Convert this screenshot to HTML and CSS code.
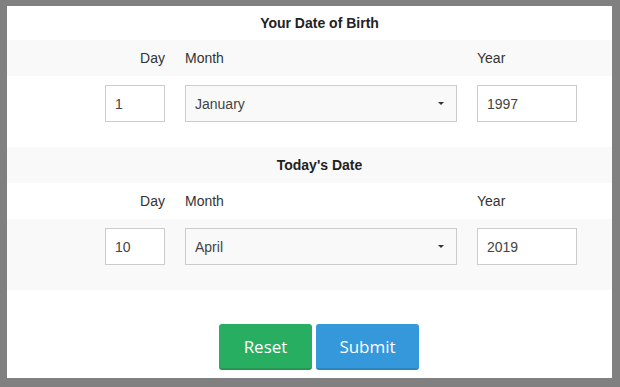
FILE: index.html
```html
<!DOCTYPE html>
<html lang="en">
<head>
    <meta charset="UTF-8">
    <meta name="viewport" content="width=device-width, initial-scale=1.0">
    <title>Age Calculator</title>
    <link rel="stylesheet" href="styles.css">
</head>
<body>
    <div class="panel">
        <div class="row title-row">Your Date of Birth</div>
        <div class="row label-row shaded">
            <span class="day-label">Day</span>
            <span>Month</span>
            <span>Year</span>
        </div>
        <div class="row input-row">
            <input type="text" class="day-input" value="1">
            <div class="select-wrap">
                <select>
                    <option selected>January</option>
                    <option>February</option>
                </select>
            </div>
            <input type="text" class="year-input" value="1997">
        </div>

        <div class="row title-row shaded tall">Today's Date</div>
        <div class="row label-row">
            <span class="day-label">Day</span>
            <span>Month</span>
            <span>Year</span>
        </div>
        <div class="row input-row shaded">
            <input type="text" class="day-input" value="10">
            <div class="select-wrap">
                <select>
                    <option>March</option>
                    <option selected>April</option>
                </select>
            </div>
            <input type="text" class="year-input" value="2019">
        </div>

        <div class="actions">
            <button class="btn btn-reset">Reset</button>
            <button class="btn btn-submit">Submit</button>
        </div>
    </div>
</body>
</html>
```

FILE: styles.css
```css
body {
    margin: 0;
    padding: 6px 8px 9px 7px;
    background-color: #808080;
    font-family: 'Liberation Sans', Arial, sans-serif;
    color: #333;
}

.panel {
    background-color: #fff;
    height: 372px;
}

.row {
    display: grid;
    grid-template-columns: 158px 272px 100px;
    column-gap: 20px;
}

.shaded {
    background-color: #f9f9f9;
}

.title-row {
    display: flex;
    justify-content: center;
    align-items: center;
    height: 34px;
    padding-left: 20px;
    font-size: 14px;
    font-weight: bold;
    color: #222;
}

.title-row.tall {
    height: 36px;
}

.label-row {
    height: 36px;
    align-items: center;
    font-size: 14px;
}

.day-label {
    text-align: right;
}

.input-row {
    height: 71px;
    box-sizing: border-box;
    padding-top: 9px;
    align-items: start;
}

.input-row input,
.input-row select {
    height: 37px;
    box-sizing: border-box;
    border: 1px solid #ccc;
    border-radius: 0;
    padding: 0 9px;
    font-family: inherit;
    font-size: 14px;
    color: #444;
    background-color: #fff;
    outline: none;
}

.day-input {
    width: 60px;
    justify-self: end;
}

.year-input {
    width: 100px;
}

.select-wrap {
    position: relative;
}

.select-wrap select {
    width: 100%;
    appearance: none;
    -webkit-appearance: none;
    background-color: #f9f9f9;
}

.select-wrap::after {
    content: "";
    position: absolute;
    right: 13px;
    top: 17px;
    border-left: 3px solid transparent;
    border-right: 3px solid transparent;
    border-top: 3px solid #333;
    pointer-events: none;
}

.actions {
    display: flex;
    gap: 4px;
    padding: 34px 0 0 212px;
}

.btn {
    height: 46px;
    border: none;
    border-bottom: 2px solid rgba(0, 0, 0, 0.12);
    border-radius: 3px;
    color: #fff;
    font-family: 'Open Sans', Lato, sans-serif;
    font-size: 17px;
    cursor: pointer;
}

.btn-reset {
    width: 93px;
    background-color: #27ae60;
}

.btn-submit {
    width: 103px;
    background-color: #3498db;
}
```
